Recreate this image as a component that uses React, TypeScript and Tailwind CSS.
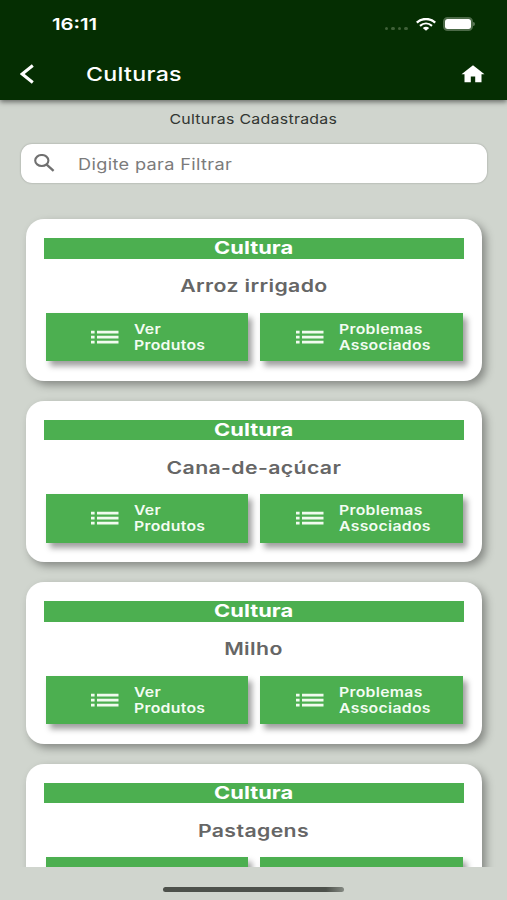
import React from "react";

const culturas = [
  { name: "Arroz irrigado", labels: true },
  { name: "Cana-de-açúcar", labels: true },
  { name: "Milho", labels: true },
  { name: "Pastagens", labels: false },
];

function StatusBar() {
  return (
    <div className="flex h-[48px] items-center pl-[52px] pr-[32px]">
      <span className="origin-left scale-x-[1.23] text-[16.5px] font-semibold leading-[20px]">16:11</span>
      <div className="ml-auto flex items-center">
        <div className="mr-[8px] mt-[9px] flex gap-[3px]">
          {[0, 1, 2, 3].map((i) => (
            <span key={i} className="h-[3px] w-[3.4px] rounded-full bg-[#3f6038]" />
          ))}
        </div>
        <svg className="mr-[7px] h-[13px] w-[20px]" viewBox="0 0 20 13" fill="none" stroke="#fff" preserveAspectRatio="none">
          <path d="M.8 4.6C6-.1 14-.1 19.2 4.6" strokeWidth="2.5" />
          <path d="M4 7.8C7.6 4.7 12.4 4.7 16 7.8" strokeWidth="2.2" />
          <path d="M6.8 10Q10 7.5 13.2 10L10 12.8Z" fill="#fff" stroke="none" />
        </svg>
        <div className="flex h-[14px] w-[30px] rounded-[4.5px] border-2 border-[#4c6a48]">
          <span className="flex-1 rounded-[2.5px] bg-white" />
        </div>
        <span className="ml-[0.5px] h-[4px] w-[2px] rounded-r-full bg-[#5b7657]" />
      </div>
    </div>
  );
}

function ListIcon() {
  return (
    <svg className="h-[14px] w-[28px] shrink-0" viewBox="0 0 28 14" fill="#f1fbef">
      <path d="M0 .7h3.6v2.8H0zM6 .7h21.5v2.8H6zM0 5.7h3.6v2.8H0zM6 5.7h21.5v2.8H6zM0 10.7h3.6v2.8H0zM6 10.7h21.5v2.8H6z" />
    </svg>
  );
}

function ActionButton({ first, second, pad, labels }: { first: string; second: string; pad: string; labels: boolean }) {
  return (
    <button
      className={`flex h-[48.5px] w-[202.4px] items-center bg-[#4caf50] text-left shadow-[4px_5px_6px_rgba(0,0,0,0.38)] ${pad}`}
    >
      {labels && (
        <>
          <ListIcon />
          <span className="ml-[15px] origin-left scale-x-[1.17] whitespace-nowrap text-[13.5px] font-semibold leading-[16.3px] tracking-[0.25px] text-[#f3fcf2]">
            {first}
            <br />
            {second}
          </span>
        </>
      )}
    </button>
  );
}

function CultureCard({ name, labels }: { name: string; labels: boolean }) {
  return (
    <section className="flex h-[161.5px] shrink-0 flex-col rounded-[18px] bg-white px-[18px] pt-[19px] shadow-[4px_4px_9px_rgba(0,0,0,0.36)]">
      <div className="flex h-[20.5px] items-center justify-center bg-[#4caf50]">
        <span className="scale-x-[1.25] text-[17.5px] font-bold leading-[20px] text-white">Cultura</span>
      </div>
      <div className="flex h-[54px] items-center justify-center pt-[1px]">
        <span className="scale-x-[1.25] text-[17px] font-semibold leading-[20px] tracking-[0.3px] text-[#666]">{name}</span>
      </div>
      <div className="flex gap-[11.8px] pl-[2px]">
        <ActionButton first="Ver" second="Produtos" pad="pl-[45px]" labels={labels} />
        <ActionButton first="Problemas" second="Associados" pad="pl-[35.8px]" labels={labels} />
      </div>
    </section>
  );
}

export default function App() {
  return (
    <main className="flex h-[900px] w-[507px] flex-col overflow-hidden bg-[#d0d5ce] font-['Inter',sans-serif]">
      <header className="z-10 h-[100px] shrink-0 bg-[#052e02] text-white shadow-[0_2px_5px_rgba(0,0,0,0.5)]">
        <StatusBar />
        <div className="flex h-[52px] items-center pl-[20px] pr-[22px]">
          <svg className="h-[20px] w-[14px]" viewBox="0 0 14 20" fill="none" stroke="#fff" strokeWidth="3">
            <path d="M12.8 1.5L2.2 10L12.8 18.5" />
          </svg>
          <h1 className="ml-[52px] mt-[2px] origin-left scale-x-[1.22] text-[19px] font-medium leading-[24px] tracking-[0.25px]">Culturas</h1>
          <svg className="ml-auto h-[18px] w-[24px]" viewBox="0 0 24 18" fill="#fff">
            <path d="M12 .3L.5 9.2H3.5V17.3H9.8V11.4H14.2V17.3H20.5V9.2H23.5Z" />
          </svg>
        </div>
      </header>

      <div className="flex h-[44px] shrink-0 justify-center pt-[10px]">
        <h2 className="h-[18px] scale-x-[1.16] text-[13.7px] leading-[18px] tracking-[0.25px] text-[#323632]">Culturas Cadastradas</h2>
      </div>

      <label className="ml-[21px] flex h-[38.5px] w-[466px] shrink-0 items-center rounded-[11px] bg-white pl-[13px] shadow-[0_0_2px_rgba(0,0,0,0.3)]">
        <svg className="h-[18px] w-[21px]" viewBox="0 0 21 18" fill="none" stroke="#707070">
          <ellipse cx="7.8" cy="6.5" rx="6.6" ry="5.5" strokeWidth="2.1" />
          <path d="M12.4 10.4L19.6 16.8" strokeWidth="2.4" />
        </svg>
        <span className="ml-[23px] mt-[3px] origin-left scale-x-[1.17] text-[15.5px] leading-[20px] tracking-[0.3px] text-[#7b7b7b]">
          Digite para Filtrar
        </span>
      </label>

      <div className="mt-[16px] flex h-[668.5px] shrink-0 flex-col gap-[20px] overflow-hidden pl-[26px] pr-[25.5px] pt-[20.6px]">
        {culturas.map(({ name, labels }) => (
          <CultureCard key={name} name={name} labels={labels} />
        ))}
      </div>

      <div className="mx-auto mt-[20px] h-[5px] w-[181px] rounded-full bg-gradient-to-r from-[#4d514b] from-90% to-[#858a83]" />
    </main>
  );
}
